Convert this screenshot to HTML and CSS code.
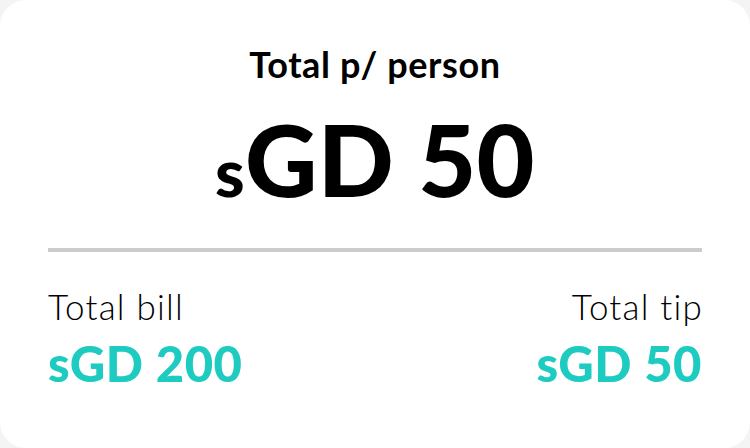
FILE: index.html
```html
<!DOCTYPE html>
<html>
<head>
<meta charset="utf-8">
<link rel="stylesheet" href="styles.css">
</head>
<body>
<div class="card">
  <div class="title">Total p/ person</div>
  <div class="big"><span class="cur">s</span>GD 50</div>
  <div class="divider"></div>
  <div class="row">
    <div class="col">
      <div class="label">Total bill</div>
      <div class="value">sGD 200</div>
    </div>
    <div class="col right">
      <div class="label">Total tip</div>
      <div class="value">sGD 50</div>
    </div>
  </div>
</div>
</body>
</html>
```
FILE: styles.css
```css
html, body {
  margin: 0;
  padding: 0;
  background: #f4f4f4;
}
.card {
  width: 750px;
  height: 448px;
  box-sizing: border-box;
  background: #ffffff;
  border-radius: 26px;
  padding: 46px 48px 0;
  display: flex;
  flex-direction: column;
  font-family: Lato, "Open Sans", sans-serif;
  color: #000;
}
.title {
  font-size: 36px;
  line-height: 36px;
  font-weight: 700;
  text-align: center;
  letter-spacing: 0.6px;
}
.big {
  margin-top: 26px;
  height: 100px;
  font-size: 100px;
  line-height: 100px;
  font-weight: 900;
  text-align: center;
  letter-spacing: 0.3px;
}
.cur {
  font-size: 67px;
  line-height: 0;
}
.divider {
  margin-top: 40px;
  height: 4px;
  background: #cccccc;
}
.row {
  margin-top: 37px;
  display: flex;
  justify-content: space-between;
}
.col {
  display: flex;
  flex-direction: column;
}
.col.right {
  align-items: flex-end;
}
.label {
  font-size: 35px;
  line-height: 35px;
  font-weight: 300;
  letter-spacing: 1.2px;
  margin-right: -1px;
}
.value {
  margin-top: 15px;
  font-size: 49px;
  line-height: 49px;
  font-weight: 900;
  color: #1ecbc0;
  letter-spacing: 0.5px;
}
```
